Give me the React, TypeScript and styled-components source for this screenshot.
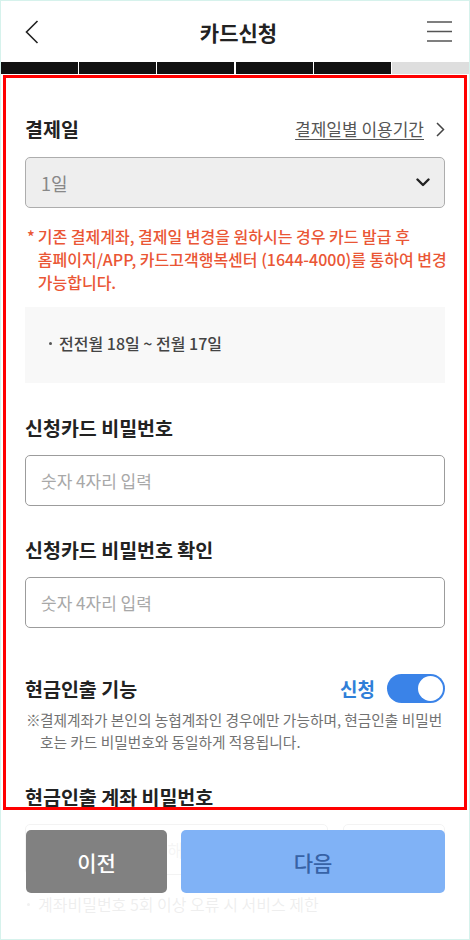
import React from 'react';
import styled, { createGlobalStyle } from 'styled-components';

const Global = createGlobalStyle`
  html, body { margin: 0; padding: 0; background: #fff; }
  * { box-sizing: border-box; }
  body {
    font-family: "Noto Sans CJK KR", "Noto Sans", sans-serif;
    color: #222;
    -webkit-font-smoothing: antialiased;
  }
`;

const Frame = styled.div`
  position: relative;
  width: 470px;
  height: 940px;
  overflow: hidden;
  border: 1px solid #d6f2ec;
  background: #fff;
`;

const Header = styled.header`
  height: 61px;
  display: grid;
  grid-template-columns: 40px 1fr 40px;
  align-items: center;
  padding: 0 17px 0 24px;
`;

const Title = styled.h1`
  margin: 0;
  text-align: center;
  font-size: 21px;
  font-weight: 700;
  color: #222;
`;

const IconBtn = styled.span<{ $right?: boolean }>`
  display: flex;
  justify-content: ${(p) => (p.$right ? 'flex-end' : 'flex-start')};
  align-items: center;
`;

const Progress = styled.div`
  height: 12px;
  display: grid;
  grid-template-columns: repeat(6, 1fr);
  column-gap: 1.3px;
`;

const Step = styled.div<{ $done: boolean }>`
  background: ${(p) => (p.$done ? '#111' : '#dedede')};
`;

const Content = styled.main`
  padding: 42px 24px 0 24px;
`;

const LabelRow = styled.div<{ $gap?: number }>`
  display: flex;
  justify-content: space-between;
  align-items: center;
  margin-top: ${(p) => p.$gap ?? 0}px;
`;

const Label = styled.h2<{ $gap?: number }>`
  margin: ${(p) => p.$gap ?? 0}px 0 0;
  font-size: 19.5px;
  line-height: 26px;
  font-weight: 700;
  color: #222;
  white-space: nowrap;
`;

const LinkText = styled.a`
  display: flex;
  align-items: center;
  gap: 12px;
  font-size: 17px;
  line-height: 24px;
  color: #555;
  span {
    text-decoration: underline;
    text-underline-offset: 3px;
    text-decoration-thickness: 1px;
  }
`;

const Select = styled.div`
  margin-top: 15px;
  height: 51px;
  display: flex;
  justify-content: space-between;
  align-items: center;
  padding: 0 14px 0 15px;
  background: #eeeeee;
  border: 1px solid #adadad;
  border-radius: 5px;
  font-size: 18px;
  color: #888;
`;

const WarnNote = styled.p`
  margin: 17px 0 0;
  display: flex;
  gap: 3px;
  padding-left: 2px;
  font-size: 16px;
  line-height: 23px;
  color: #ea5635;
  font-weight: 500;
  white-space: nowrap;
`;

const InfoBox = styled.div`
  margin-top: 13px;
  background: #f8f8f8;
  padding: 25px 24px 29px;
  display: flex;
  align-items: center;
  gap: 7px;
  font-size: 16px;
  line-height: 22px;
  color: #444;
  font-weight: 500;
`;

const Dot = styled.span<{ $color?: string }>`
  width: 3px;
  height: 3px;
  border-radius: 50%;
  background: ${(p) => p.$color ?? '#555'};
  flex: none;
`;

const Input = styled.input`
  display: block;
  width: 100%;
  margin-top: 14px;
  height: 51px;
  border: 1px solid #9c9c9c;
  border-radius: 5px;
  padding: 0 15px;
  font-family: inherit;
  font-size: 17px;
  color: #222;
  background: #fff;
  outline: none;
  &::placeholder { color: #a8a8a8; }
`;

const InputRow = styled.div`
  margin-top: 14px;
  display: grid;
  grid-template-columns: 1fr 102px;
  gap: 15px;
  ${Input} { margin-top: 0; }
`;

const SmallBtn = styled.div`
  height: 51px;
  border: 1px solid #9c9c9c;
  border-radius: 5px;
  display: flex;
  align-items: center;
  justify-content: center;
  font-size: 16px;
  color: #444;
`;

const ToggleWrap = styled.div`
  display: flex;
  align-items: center;
  gap: 12px;
`;

const ToggleText = styled.span`
  font-size: 19px;
  font-weight: 700;
  color: #2f7fd8;
`;

const Toggle = styled.div<{ $on: boolean }>`
  width: 58px;
  height: 29px;
  border-radius: 15px;
  background: ${(p) => (p.$on ? '#3a83e8' : '#ccc')};
  display: flex;
  align-items: center;
  justify-content: ${(p) => (p.$on ? 'flex-end' : 'flex-start')};
  padding: 0 2px;
`;

const Knob = styled.span`
  width: 25px;
  height: 25px;
  border-radius: 50%;
  background: #fff;
`;

const SubNote = styled.p`
  margin: 6px 0 0;
  display: flex;
  padding-left: 1px;
  font-size: 14.7px;
  line-height: 22px;
  color: #727272;
  white-space: nowrap;
`;

const Mark = styled.span`
  flex: none;
  width: 14px;
`;

const BulletLine = styled.div`
  margin-top: 18px;
  display: flex;
  align-items: center;
  gap: 8px;
  padding-left: 2px;
  font-size: 16px;
  line-height: 22px;
  color: #777;
`;

const BottomBar = styled.div`
  position: absolute;
  left: 0;
  right: 0;
  top: 809px;
  bottom: 0;
  background: rgba(255, 255, 255, 0.88);
  padding: 20px 24px 0 25px;
`;

const Buttons = styled.div`
  display: grid;
  grid-template-columns: 141px 1fr;
  gap: 14px;
`;

const ActionBtn = styled.button<{ $primary?: boolean }>`
  height: 63px;
  border: none;
  border-radius: 5px;
  font-family: inherit;
  font-size: 21px;
  font-weight: 500;
  background: ${(p) => (p.$primary ? '#80b2f6' : '#818181')};
  color: ${(p) => (p.$primary ? '#3762a6' : '#fff')};
`;

const Highlight = styled.div`
  position: absolute;
  left: 2px;
  top: 74px;
  width: 464px;
  height: 735px;
  border: 3px solid #ff0000;
  pointer-events: none;
`;

const BackIcon = () => (
  <svg width="14" height="24" viewBox="0 0 14 24" fill="none">
    <path d="M12.5 1 L1.5 12 L12.5 23" stroke="#222" strokeWidth="1.6" />
  </svg>
);

const MenuIcon = () => (
  <svg width="25" height="21" viewBox="0 0 25 21" fill="none">
    <path d="M0 1 H25 M0 10.5 H25 M0 20 H25" stroke="#555" strokeWidth="1.6" />
  </svg>
);

const ChevronRight = () => (
  <svg width="9" height="15" viewBox="0 0 9 15" fill="none">
    <path d="M1 1 L7.5 7.5 L1 14" stroke="#444" strokeWidth="1.5" />
  </svg>
);

const ChevronDown = () => (
  <svg width="14" height="9" viewBox="0 0 14 9" fill="none">
    <path d="M1.5 1.5 L7 7 L12.5 1.5" stroke="#222" strokeWidth="2.4" strokeLinecap="round" strokeLinejoin="round" />
  </svg>
);

export default function App() {
  const steps = [true, true, true, true, true, false];
  return (
    <>
      <Global />
      <Frame>
        <Header>
          <IconBtn><BackIcon /></IconBtn>
          <Title>카드신청</Title>
          <IconBtn $right><MenuIcon /></IconBtn>
        </Header>
        <Progress>
          {steps.map((d, i) => (
            <Step key={i} $done={d} />
          ))}
        </Progress>
        <Content>
          <LabelRow>
            <Label>결제일</Label>
            <LinkText>
              <span>결제일별 이용기간</span>
              <ChevronRight />
            </LinkText>
          </LabelRow>
          <Select>
            <span>1일</span>
            <ChevronDown />
          </Select>
          <WarnNote>
            <span>*</span>
            <span>
              기존 결제계좌, 결제일 변경을 원하시는 경우 카드 발급 후<br />
              홈페이지/APP, 카드고객행복센터 (1644-4000)를 통하여 변경<br />
              가능합니다.
            </span>
          </WarnNote>
          <InfoBox>
            <Dot />
            <span>전전월 18일 ~ 전월 17일</span>
          </InfoBox>

          <Label $gap={32}>신청카드 비밀번호</Label>
          <Input type="password" placeholder="숫자 4자리 입력" />

          <Label $gap={31}>신청카드 비밀번호 확인</Label>
          <Input type="password" placeholder="숫자 4자리 입력" />

          <LabelRow $gap={46}>
            <Label>현금인출 기능</Label>
            <ToggleWrap>
              <ToggleText>신청</ToggleText>
              <Toggle $on>
                <Knob />
              </Toggle>
            </ToggleWrap>
          </LabelRow>
          <SubNote>
            <Mark>※</Mark>
            <span>
              결제계좌가 본인의 농협계좌인 경우에만 가능하며, 현금인출 비밀번<br />
              호는 카드 비밀번호와 동일하게 적용됩니다.
            </span>
          </SubNote>

          <Label $gap={31}>현금인출 계좌 비밀번호</Label>
          <InputRow>
            <Input type="password" placeholder="숫자 4자리를 입력해 주세요" />
            <SmallBtn>확인</SmallBtn>
          </InputRow>
          <BulletLine>
            <Dot $color="#888" />
            <span>계좌비밀번호 5회 이상 오류 시 서비스 제한</span>
          </BulletLine>
        </Content>

        <BottomBar>
          <Buttons>
            <ActionBtn>이전</ActionBtn>
            <ActionBtn $primary>다음</ActionBtn>
          </Buttons>
        </BottomBar>
        <Highlight />
      </Frame>
    </>
  );
}
